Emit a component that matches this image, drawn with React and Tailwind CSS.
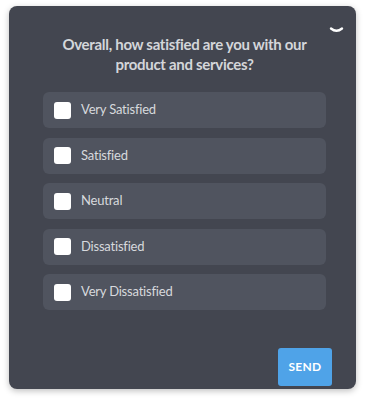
import { useState } from "react";

const options = [
  "Very Satisfied",
  "Satisfied",
  "Neutral",
  "Dissatisfied",
  "Very Dissatisfied",
];

export default function App() {
  const [checked, setChecked] = useState({});

  return (
    <div className="w-[365px] h-[402px] bg-white pt-[6px] pl-[9px] font-['Lato',sans-serif]">
      <div className="relative w-[347px] h-[383px] rounded-lg bg-[#434650] shadow-[0_2px_6px_rgba(0,0,0,0.25)] flex flex-col pl-[34px] pr-[30px] pt-[28px]">
        <svg
          className="absolute right-[12px] top-[20px]"
          width="15"
          height="9"
          viewBox="0 0 15 9"
          fill="none"
        >
          <path
            d="M2 2.5 Q7.5 7 13 2.5"
            stroke="#ffffff"
            strokeWidth="2.4"
            strokeLinecap="round"
          />
        </svg>
        <h2 className="text-center text-[15px] leading-[20px] font-bold tracking-[-0.3px] text-[#d4d6da]">
          Overall, how satisfied are you with our product and services?
        </h2>
        <div className="mt-[18px] flex flex-col gap-[9.5px]">
          {options.map((label, i) => (
            <label
              key={label}
              className="h-[36px] rounded-md bg-[#50545f] flex items-center pl-[11px] gap-[10px] cursor-pointer"
              onClick={() => setChecked({ ...checked, [i]: !checked[i] })}
            >
              <span className="w-[17px] h-[17px] rounded-[3px] bg-white" />
              <span className="text-[13px] tracking-[-0.2px] text-[#d7d9dd]">{label}</span>
            </label>
          ))}
        </div>
        <div className="mt-auto mb-[3px] flex justify-end -mr-[6px]">
          <button className="w-[54px] h-[38px] rounded-[3px] bg-[#4fa3e8] text-white text-[12px] font-bold tracking-wide">
            SEND
          </button>
        </div>
      </div>
    </div>
  );
}
